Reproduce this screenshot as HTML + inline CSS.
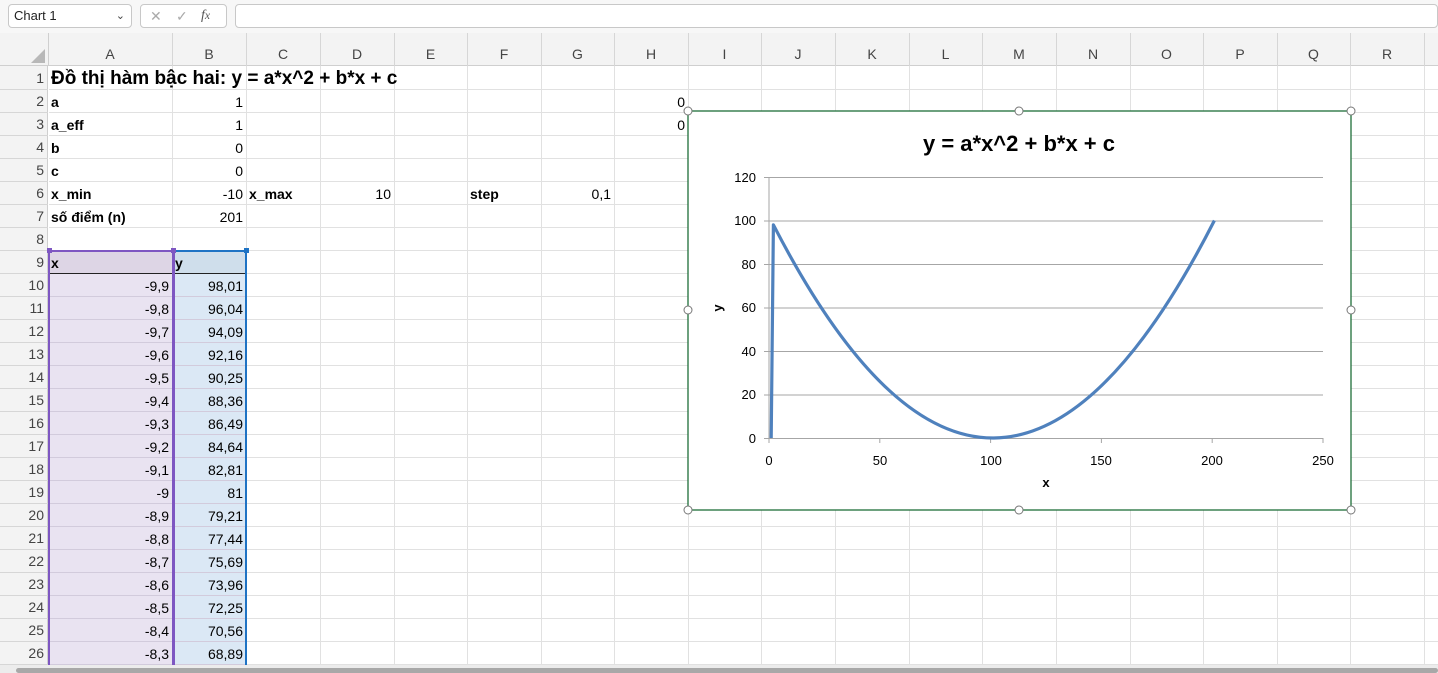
<!DOCTYPE html>
<html><head><meta charset="utf-8"><style>
*{margin:0;padding:0;box-sizing:border-box}
body{width:1438px;height:673px;overflow:hidden;background:#fff;font-family:"Liberation Sans",Arial,sans-serif;position:relative}
.a{position:absolute}
.ch{position:absolute;top:46px;height:20px;text-align:center;font-size:14px;color:#444}
.rh{position:absolute;left:0;width:44px;text-align:right;font-size:14px;color:#444;height:23px;line-height:23px}
.c{position:absolute;height:23px;line-height:24px;font-size:14px;color:#000;white-space:nowrap}
.b{font-weight:bold}
.r{text-align:right}
</style></head><body>
<div class="a" style="left:0;top:0;width:1438px;height:33px;background:#f7f7f7"></div>
<div class="a" style="left:8px;top:4px;width:124px;height:24px;border:1px solid #c8c8c8;border-radius:4px;background:#fff;font-size:13px;line-height:22px;padding-left:5px;color:#222">Chart 1<span style="position:absolute;right:6px;top:0;color:#444;font-size:11px">&#8964;</span></div>
<div class="a" style="left:140px;top:4px;width:87px;height:24px;border:1px solid #c8c8c8;border-radius:4px;background:#fff;color:#aaa;font-size:14px;line-height:22px"><span style="position:absolute;left:9px">✕</span><span style="position:absolute;left:35px">✓</span><span style="position:absolute;left:60px;color:#555;font-style:italic;font-family:'Liberation Serif',serif">f<small>x</small></span></div>
<div class="a" style="left:235px;top:4px;width:1203px;height:24px;border:1px solid #c8c8c8;border-radius:4px;background:#fff"></div>
<div class="a" style="left:0;top:33px;width:1438px;height:33px;background:#f3f3f3;border-bottom:1px solid #cfcfcf"></div>
<div class="a" style="left:0;top:66px;width:48px;height:607px;background:#f3f3f3;border-right:1px solid #cfcfcf"></div>
<div class="a" style="left:48px;top:33px;width:1px;height:33px;background:#cfcfcf"></div>
<svg class="a" style="left:30px;top:48px" width="16" height="16"><polygon points="15,1 15,15 1,15" fill="#b8b8b8"/></svg>
<div class="a" style="left:0;top:665px;width:1438px;height:8px;background:#ececec"></div>
<div class="a" style="left:16px;top:668px;width:1422px;height:5px;background:#a8a8a8;border-radius:3px"></div>
<div id="g"></div>
<div class="a" style="left:49px;top:251px;width:124px;height:414px;background:#e9e3f1"></div>
<div class="a" style="left:49px;top:251px;width:124px;height:23px;background:#ddd5e5"></div>
<div class="a" style="left:174px;top:251px;width:72px;height:414px;background:#dbe8f5"></div>
<div class="a" style="left:174px;top:251px;width:72px;height:23px;background:#cfdeeb"></div>
<div id="g2"></div>
<div class="a" style="left:49px;top:273px;width:197px;height:1px;background:#222"></div>
<div class="a" style="left:48px;top:250px;width:2px;height:415px;background:#7e57c2"></div>
<div class="a" style="left:172px;top:250px;width:3px;height:415px;background:#7e57c2"></div>
<div class="a" style="left:48px;top:250px;width:125px;height:2px;background:#7e57c2"></div>
<div class="a" style="left:175px;top:250px;width:71px;height:2px;background:#1f73c4"></div>
<div class="a" style="left:245px;top:250px;width:2px;height:415px;background:#1f73c4"></div>
<div class="a" style="left:47px;top:248px;width:5px;height:5px;background:#7e57c2"></div>
<div class="a" style="left:171px;top:248px;width:5px;height:5px;background:#7e57c2"></div>
<div class="a" style="left:244px;top:248px;width:5px;height:5px;background:#1f73c4"></div>
<div id="t"></div>
<svg class="a" style="left:680px;top:103px" width="680" height="416" viewBox="680 103 680 416">
<rect x="688" y="111" width="663" height="399" fill="#fff" stroke="#1e6e38" stroke-width="1.3"/>
<text x="1019" y="151" text-anchor="middle" font-family="Liberation Sans,Arial" font-weight="bold" font-size="22" fill="#000">y = a*x^2 + b*x + c</text>
<g stroke="#a6a6a6" stroke-width="1">
<line x1="764" y1="177.5" x2="1323" y2="177.5"/><line x1="764" y1="221" x2="1323" y2="221"/><line x1="764" y1="264.5" x2="1323" y2="264.5"/><line x1="764" y1="308" x2="1323" y2="308"/><line x1="764" y1="351.5" x2="1323" y2="351.5"/><line x1="764" y1="395" x2="1323" y2="395"/><line x1="764" y1="438.5" x2="1323" y2="438.5"/>
<line x1="769" y1="177" x2="769" y2="443"/>
<line x1="879.8" y1="438" x2="879.8" y2="443"/><line x1="990.6" y1="438" x2="990.6" y2="443"/><line x1="1101.4" y1="438" x2="1101.4" y2="443"/><line x1="1212.2" y1="438" x2="1212.2" y2="443"/><line x1="1323" y1="438" x2="1323" y2="443"/>
</g>
<g font-family="Liberation Sans,Arial" font-size="13" fill="#000" text-anchor="end">
<text x="756" y="182">120</text><text x="756" y="225">100</text><text x="756" y="269">80</text><text x="756" y="312">60</text><text x="756" y="356">40</text><text x="756" y="399">20</text><text x="756" y="443">0</text>
</g>
<g font-family="Liberation Sans,Arial" font-size="13" fill="#000" text-anchor="middle">
<text x="769" y="465">0</text><text x="880" y="465">50</text><text x="991" y="465">100</text><text x="1101" y="465">150</text><text x="1212" y="465">200</text><text x="1323" y="465">250</text>
<text x="1046" y="487" font-weight="bold">x</text>
<text x="722" y="308" font-weight="bold" transform="rotate(-90 722 308)">y</text>
</g>
<path d="M771.2 438 L773.4 224.8 Q993.9 653.3 1214.4 220.5" fill="none" stroke="#4f81bd" stroke-width="3.2" stroke-linejoin="round"/>
<g fill="#fff" stroke="#777" stroke-width="1">
<circle cx="688" cy="111" r="4"/><circle cx="1019" cy="111" r="4"/><circle cx="1351" cy="111" r="4"/>
<circle cx="688" cy="310" r="4"/><circle cx="1351" cy="310" r="4"/>
<circle cx="688" cy="510" r="4"/><circle cx="1019" cy="510" r="4"/><circle cx="1351" cy="510" r="4"/>
</g>
</svg>
<script>
(function(){
var cols=[48,172,246,320,394,467,541,614,688,761,835,909,982,1056,1130,1203,1277,1350,1424];
var L="ABCDEFGHIJKLMNOPQR";var h="",h2="";
for(var i=0;i<18;i++){h+='<div class="ch" style="left:'+cols[i]+'px;width:'+(cols[i+1]-cols[i])+'px">'+L[i]+'</div>';
h+='<div class="a" style="left:'+cols[i+1]+'px;top:33px;width:1px;height:33px;background:#d6d6d6"></div>';
h+='<div class="a" style="left:'+cols[i+1]+'px;top:66px;width:1px;height:599px;background:#e1e1e1"></div>';}
for(var r=1;r<=26;r++){var tp=67+(r-1)*23;
h+='<div class="rh" style="top:'+tp+'px">'+r+'</div>';
h+='<div class="a" style="left:0;top:'+(tp+22)+'px;width:48px;height:1px;background:#d6d6d6"></div>';
h+='<div class="a" style="left:49px;top:'+(tp+22)+'px;width:1389px;height:1px;background:#e1e1e1"></div>';
if(r>=9)h2+='<div class="a" style="left:49px;top:'+(tp+22)+'px;width:197px;height:1px;background:#d2cbdc"></div>';}
document.getElementById('g').innerHTML=h;
document.getElementById('g2').innerHTML=h2;
function c(r,col,txt,cls){var tp=67+(r-1)*23;var l=cols[col],w=cols[col+1]-cols[col];
var st=cls.indexOf('r')>=0?'left:'+l+'px;width:'+(w-3)+'px':'left:'+(l+3)+'px';
return '<div class="c '+cls+'" style="top:'+tp+'px;'+st+'">'+txt+'</div>';}
var t="";
t+='<div class="c b" style="top:67px;left:51px;font-size:19px;line-height:23px;letter-spacing:0px">Đồ thị hàm bậc hai: y = a*x^2 + b*x + c</div>';
t+=c(2,0,'a','b')+c(2,1,'1','r')+c(3,0,'a_eff','b')+c(3,1,'1','r')+c(4,0,'b','b')+c(4,1,'0','r')+c(5,0,'c','b')+c(5,1,'0','r');
t+=c(2,7,'0','r')+c(3,7,'0','r');
t+=c(6,0,'x_min','b')+c(6,1,'-10','r')+c(6,2,'x_max','b')+c(6,3,'10','r')+c(6,5,'step','b')+c(6,6,'0,1','r');
t+=c(7,0,'số điểm (n)','b')+c(7,1,'201','r');
t+=c(9,0,'x','b')+c(9,1,'y','b');
for(var r=10;r<=26;r++){var x=-9.9+(r-10)*0.1;x=Math.round(x*10)/10;var y=Math.round(x*x*100)/100;
t+=c(r,0,String(x).replace('.',','),'r')+c(r,1,String(y).replace('.',','),'r');}
document.getElementById('t').innerHTML=t;
})();
</script>
</body></html>
